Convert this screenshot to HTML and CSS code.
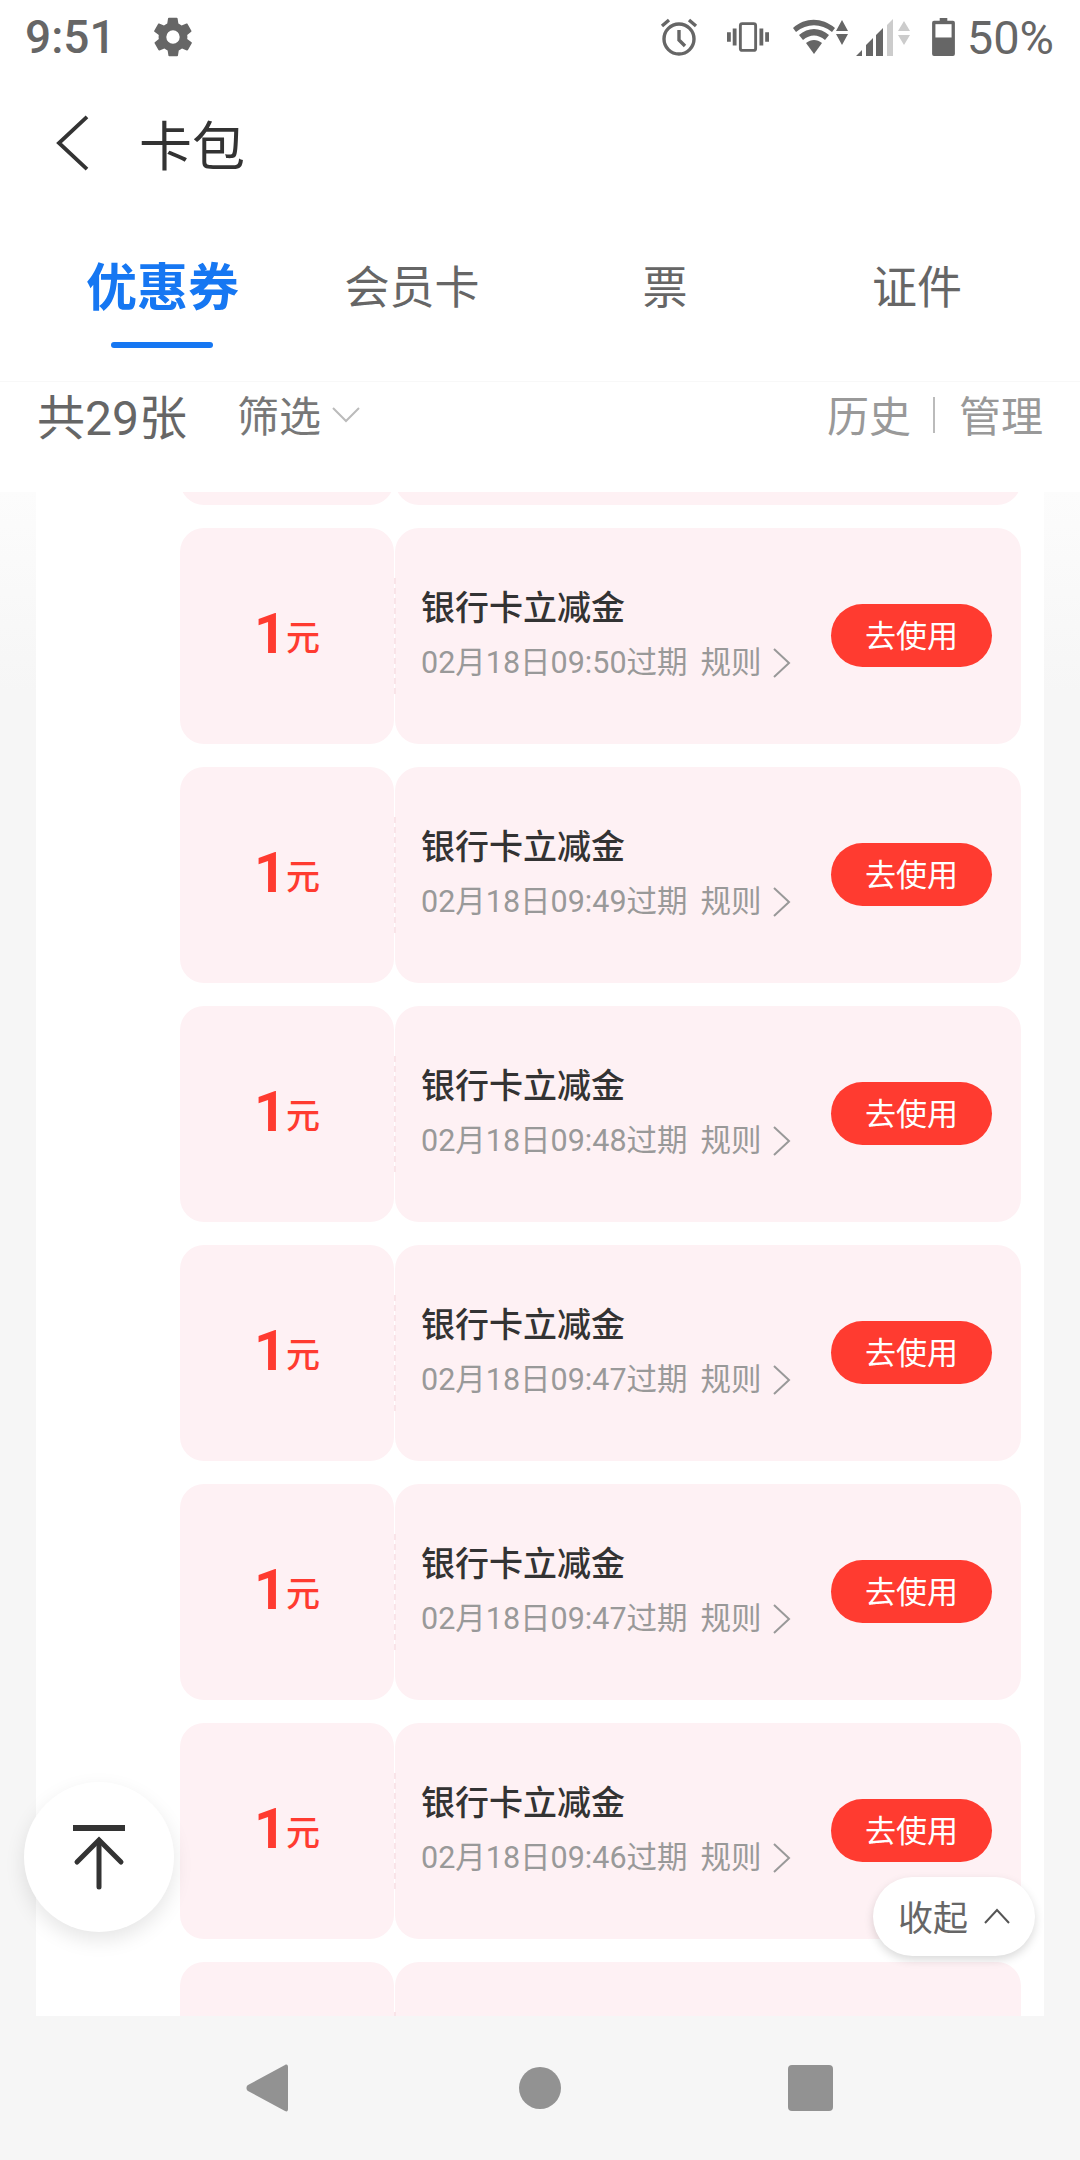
FILE: index.html
```html
<!DOCTYPE html>
<html lang="zh-CN">
<head>
    <meta charset="utf-8">
    <title>卡包</title>
    <link rel="stylesheet" href="styles.css">
</head>
<body>
    <div class="phone">
        <div class="status-bar">
            <div class="status-left">
                <span class="status-text status-time">9:51</span>
                <svg class="gear" viewBox="0 0 24 24"><path d="M19.4 13c.1-.3.1-.7.1-1s0-.7-.1-1l2.1-1.7c.2-.2.2-.4.1-.6l-2-3.500c-.1-.2-.4-.3-.6-.2l-2.500 1c-.5-.4-1.100-.7-1.700-1l-.4-2.600c0-.2-.2-.4-.5-.4h-4c-.3 0-.5.2-.5.4l-.4 2.600c-.6.3-1.200.6-1.700 1l-2.500-1c-.2-.1-.5 0-.6.2l-2 3.500c-.1.2-.1.4.1.6L4.600 11c-.1.3-.1.7-.1 1s0 .7.1 1l-2.100 1.700c-.2.2-.2.4-.1.6l2 3.500c.1.2.4.3.6.2l2.500-1c.5.4 1.100.7 1.700 1l.4 2.600c0 .2.2.4.5.4h4c.3 0 .5-.2.5-.4l.4-2.600c.6-.3 1.200-.6 1.700-1l2.500 1c.2.1.5 0 .6-.2l2-3.500c.1-.2.1-.4-.1-.6zM12 15.500a3.500 3.500 0 1 1 0-7 3.500 3.500 0 0 1 0 7z"/></svg>
            </div>
            <div class="status-right">
                <svg class="ic-alarm" viewBox="0 0 40 40" fill="none" stroke="#666" stroke-width="3.4"><circle cx="20" cy="22" r="15"/><path d="M20 13v10l6 6"/><path d="M3 9l7-6M37 9l-7-6"/></svg>
                <svg class="ic-vibrate" viewBox="0 0 44 32" fill="none" stroke="#666"><rect x="14" y="2" width="16" height="28" rx="2" stroke-width="3"/><path d="M8 7v18M36 7v18" stroke-width="4"/><path d="M2 11v10M42 11v10" stroke-width="4"/></svg>
                <svg class="ic-wifi" viewBox="0 0 56 36" fill="#666"><path d="M0 9C12-2 29-2 42 9l-3 4C28 4 14 4 3 13z"/><path d="M6 16c9-8 21-8 30 0l-4 5c-7-6-15-6-22 0z"/><path d="M13 24c5-4 11-4 16 0l-8 11z"/><path d="M49 1l6 11H43zM49 26l-6-11h12z"/></svg>
                <svg class="ic-signal" viewBox="0 0 56 40" fill="#666"><path d="M0 39l6-6v6zM10 39V28l7-7v18zM20 39V18l7-7v28z"/><path d="M31 39V8l6-6v37z" fill="#ccc"/><path d="M48 4l6 10H42zM48 28l-6-10h12z" fill="#ccc"/></svg>
                <svg class="ic-battery" viewBox="0 0 24 40"><path d="M8 0h8v3h6a2 2 0 0 1 2 2v33a2 2 0 0 1-2 2H2a2 2 0 0 1-2-2V5a2 2 0 0 1 2-2h6z" fill="#666"/><rect x="3.500" y="6.500" width="17" height="14" fill="#fff"/></svg>
                <span class="status-text">50%</span>
            </div>
        </div>

        <div class="title-bar">
            <svg class="back" viewBox="0 0 36 58" fill="none" stroke="#333" stroke-width="4"><path d="M33 2L4 29l29 27"/></svg>
            <span class="title">卡包</span>
        </div>

        <div class="tabs">
            <div class="tab tab-active">优惠券<i class="tab-line"></i></div>
            <div class="tab">会员卡</div>
            <div class="tab">票</div>
            <div class="tab">证件</div>
        </div>

        <div class="filter-bar">
            <span class="total">共29张</span>
            <span class="filter">筛选</span>
            <svg class="filter-arrow" viewBox="0 0 28 16" fill="none" stroke="#bbb" stroke-width="2"><path d="M1 1l13 13L27 1"/></svg>
            <span class="filter-right">历史</span>
            <i class="filter-sep"></i>
            <span class="filter-manage">管理</span>
        </div>

        <div class="content">
            <div class="content-inner">
                <div class="coupon-list" id="couponList"></div>
            </div>
        </div>

        <div class="top-btn">
            <svg viewBox="0 0 52 65" fill="none" stroke="#333" stroke-width="5" stroke-linecap="round"><path d="M0 3h52" stroke-width="6" stroke-linecap="butt"/><path d="M26 62V16"/><path d="M4 37l22-22 22 22"/></svg>
        </div>
        <div class="fold-btn">
            <span>收起</span>
            <svg viewBox="0 0 26 16" fill="none" stroke="#555" stroke-width="2"><path d="M1 15L13 2l12 13"/></svg>
        </div>

        <div class="nav-bar">
            <svg class="nav-back" viewBox="0 0 42 48"><path d="M39 1c2-1 3 0 3 2v42c0 2-1 3-3 2L2 27c-2-1-2-5 0-6z"/></svg>
            <i class="nav-home"></i>
            <i class="nav-recent"></i>
        </div>
    </div>

    <script>
        // first and last coupon are scrolled out of view, only their edges show
        const times = ['', '09:50', '09:49', '09:48', '09:47', '09:47', '09:46', ''];
        const list = document.getElementById('couponList');

        times.forEach(time => {
            const card = document.createElement('div');
            card.className = 'coupon';
            if (!time) {
                card.innerHTML = '<div class="coupon-price"></div><div class="coupon-body"></div>';
                list.appendChild(card);
                return;
            }
            card.innerHTML = `
                <div class="coupon-price"><b>1</b><span>元</span></div>
                <div class="coupon-body">
                    <div class="coupon-info">
                        <div class="coupon-name">银行卡立减金</div>
                        <div class="coupon-sub">02月18日${time}过期<span class="rule">规则</span>
                            <svg viewBox="0 0 18 30" fill="none" stroke="#999" stroke-width="2"><path d="M1 1l15 14L1 29"/></svg>
                        </div>
                    </div>
                    <div class="coupon-use">去使用</div>
                </div>
            `;
            list.appendChild(card);
        });
    </script>
</body>
</html>
```

FILE: styles.css
```css
* {
    box-sizing: border-box;
}
body {
    margin: 0;
    font-family: Roboto, "Noto Sans CJK SC", sans-serif;
    background-color: #f6f6f6;
}
.phone {
    position: relative;
    width: 1080px;
    height: 2160px;
    display: flex;
    flex-direction: column;
    overflow: hidden;
}
.status-bar {
    height: 74px;
    padding: 0 26px 0 25px;
    display: flex;
    align-items: center;
    justify-content: space-between;
    background-color: white;
}
.status-left, .status-right {
    display: flex;
    align-items: center;
}
.status-text {
    font-size: 47px;
    color: #666;
}
.status-time {
    font-size: 46px;
    font-weight: 500;
}
.gear {
    width: 46px;
    height: 46px;
    margin-left: 34px;
    fill: #666;
}
.ic-alarm {
    width: 40px;
    height: 40px;
}
.ic-vibrate {
    width: 42px;
    height: 32px;
    margin-left: 28px;
}
.ic-wifi {
    width: 56px;
    height: 36px;
    margin-left: 24px;
}
.ic-signal {
    width: 56px;
    height: 40px;
    margin-left: 7px;
}
.ic-battery {
    width: 23px;
    height: 38px;
    margin-left: 20px;
}
.status-right .status-text {
    margin-left: 12px;
}
.title-bar {
    height: 138px;
    padding: 0 0 0 55px;
    display: flex;
    align-items: center;
    background-color: white;
}
.back {
    width: 35px;
    height: 56px;
}
.title {
    margin-left: 49px;
    font-size: 53px;
    color: #333;
}
.tabs {
    height: 170px;
    padding-bottom: 15px;
    display: grid;
    grid-template-columns: 86px 152px 106px 136px 162px 46px 184px 88px;
    align-items: center;
    background-color: white;
    border-bottom: 1px solid #f8f8f8;
    font-size: 45px;
    line-height: 60px;
    color: #666;
}
.tab {
    position: relative;
    text-align: center;
    white-space: nowrap;
}
.tab:nth-child(1) {
    grid-column: 2;
}
.tab:nth-child(2) {
    grid-column: 4;
}
.tab:nth-child(3) {
    grid-column: 6;
}
.tab:nth-child(4) {
    grid-column: 8;
}
.tab-active {
    font-size: 51px;
    font-weight: bold;
    color: #1677f2;
}
.tab-line {
    position: absolute;
    left: 25px;
    bottom: -29px;
    width: 102px;
    height: 6px;
    border-radius: 3px;
    background-color: #1677f2;
}
.filter-bar {
    height: 110px;
    padding: 0 37px 47px 37px;
    display: flex;
    align-items: center;
    background-color: white;
}
.total {
    font-size: 48px;
    color: #666;
}
.filter {
    margin-left: 50px;
    font-size: 42px;
    color: #777;
}
.filter-arrow {
    width: 28px;
    height: 16px;
    margin: 3px 0 0 11px;
}
.filter-right {
    margin-left: auto;
    font-size: 42px;
    color: #999;
}
.filter-sep {
    width: 2px;
    height: 36px;
    margin: 3px 24px 0 22px;
    background-color: #bbb;
}
.filter-manage {
    font-size: 42px;
    color: #999;
}
.content {
    height: 1524px;
    padding: 0 36px;
    background: linear-gradient(#fcfcfc, #f6f6f6 200px);
}
.content-inner {
    height: 100%;
    padding: 0 23px 0 144px;
    overflow: hidden;
    background-color: white;
}
.coupon-list {
    display: flex;
    flex-direction: column;
    gap: 23px;
    margin-top: -203px;
}
.coupon {
    flex: none;
    height: 216px;
    display: flex;
    gap: 1px;
}
.coupon-price {
    width: 214px;
    padding-bottom: 82px;
    display: flex;
    align-items: flex-end;
    justify-content: center;
    border-radius: 24px;
    background-color: #fef1f4;
    color: #ff3b30;
}
.coupon-price b {
    font-size: 56px;
    font-weight: bold;
    line-height: 56px;
}
.coupon-price span {
    margin-bottom: 7px;
    font-size: 34px;
    font-weight: 500;
    line-height: 34px;
}
.coupon-body {
    position: relative;
    flex: 1;
    padding: 0 29px 0 26px;
    display: flex;
    align-items: center;
    justify-content: space-between;
    border-radius: 24px;
    background-color: #fef1f4;
}
.coupon-body::before {
    content: "";
    position: absolute;
    left: -1px;
    top: 50px;
    bottom: 50px;
    border-left: 2px dashed #f9e4e8;
}
.coupon-info {
    padding-bottom: 5px;
}
.coupon-name {
    font-size: 34px;
    font-weight: 500;
    line-height: 50px;
    color: #333;
}
.coupon-sub {
    margin-top: 8px;
    display: flex;
    align-items: center;
    font-size: 30.5px;
    line-height: 44px;
    color: #999;
}
.rule {
    margin-left: 13px;
}
.coupon-sub svg {
    width: 18px;
    height: 30px;
    margin-left: 11px;
}
.coupon-use {
    width: 161px;
    height: 63px;
    margin-bottom: 1px;
    border-radius: 32px;
    background-color: #ff3b30;
    color: white;
    font-size: 31px;
    line-height: 65px;
    text-align: center;
}
.top-btn {
    position: absolute;
    left: 24px;
    top: 1782px;
    width: 150px;
    height: 150px;
    display: flex;
    align-items: center;
    justify-content: center;
    border-radius: 50%;
    background-color: white;
    box-shadow: 0 8px 20px rgba(0,0,0,0.1);
}
.top-btn svg {
    width: 52px;
    height: 65px;
}
.fold-btn {
    position: absolute;
    left: 873px;
    top: 1877px;
    width: 162px;
    height: 79px;
    padding-bottom: 2px;
    display: flex;
    align-items: center;
    justify-content: center;
    gap: 16px;
    border-radius: 40px;
    background-color: white;
    box-shadow: 0 4px 10px rgba(0,0,0,0.15);
    font-size: 35px;
    color: #666;
}
.fold-btn svg {
    width: 26px;
    height: 16px;
}
.nav-bar {
    flex: 1;
    position: relative;
    background-color: #f6f6f6;
}
.nav-back {
    position: absolute;
    left: 246px;
    top: 48px;
    width: 42px;
    height: 48px;
    fill: #929292;
}
.nav-home {
    position: absolute;
    left: 519px;
    top: 51px;
    width: 42px;
    height: 42px;
    border-radius: 50%;
    background-color: #929292;
}
.nav-recent {
    position: absolute;
    left: 788px;
    top: 49px;
    width: 45px;
    height: 46px;
    border-radius: 4px;
    background-color: #929292;
}
```
